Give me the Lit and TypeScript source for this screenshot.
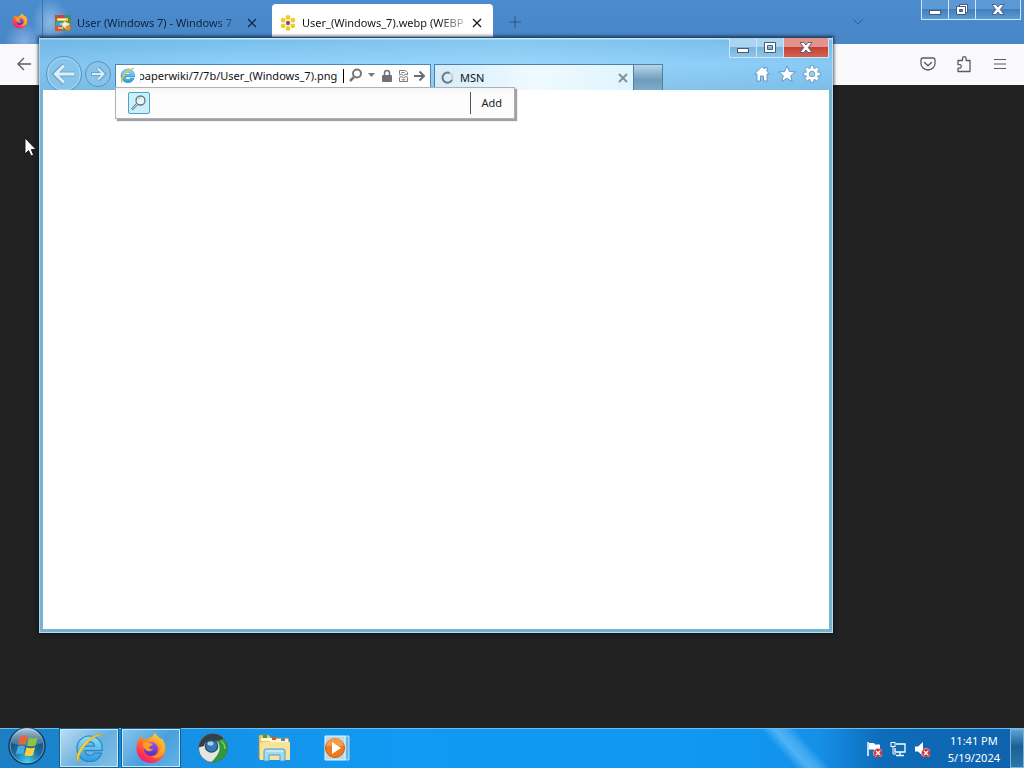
import { LitElement, html, css, svg } from "lit";
import { customElement } from "lit/decorators.js";

const ieLogo = html`<svg class="glyph" viewBox="0 0 32 32" aria-hidden="true">
  <defs>
    <linearGradient id="ieb" x1="0" y1="0" x2="0" y2="1">
      <stop offset="0" stop-color="#8fe0fb" /><stop offset="1" stop-color="#2a9be0" />
    </linearGradient>
  </defs>
  <path d="M16.500 4C9.300 4 4 9.500 4 16.600S9.400 29.500 16.800 29.500c5.600 0 10-3.200 11.700-8.300h-7.300c-.9 1.500-2.300 2.300-4.300 2.300-3 0-5-1.900-5.200-4.900h17.600C29.900 10 25 4 16.500 4zM11.800 14.200c.4-2.700 2.200-4.300 4.900-4.300s4.500 1.600 4.800 4.300z" fill="url(#ieb)" stroke="#2b83c4" stroke-width="1.200" />
  <path d="M6 30.500C1 28 4.500 17.500 12.500 9.800 19.500 3 27.500.5 30 3.600c-2.500-1-8 .8-13.500 5.700C9.500 15.600 4.300 25 6 30.500z" fill="#f6d33a" stroke="#c79a16" stroke-width=".5" />
</svg>`;

const firefoxLogo = html`<svg class="glyph" viewBox="0 0 32 32" aria-hidden="true">
  <defs>
    <linearGradient id="ffa" x1=".8" y1="0" x2=".2" y2="1">
      <stop offset="0" stop-color="#ffe23c" /><stop offset=".4" stop-color="#ff8a20" /><stop offset=".75" stop-color="#ff3b4c" /><stop offset="1" stop-color="#e31587" />
    </linearGradient>
    <linearGradient id="ffb" x1="0" y1="0" x2="0" y2="1">
      <stop offset="0" stop-color="#9059ff" /><stop offset="1" stop-color="#5b2bb5" />
    </linearGradient>
  </defs>
  <path d="M3 9c.5-2 1.700-3.800 3-5 .2 1.500.8 2.500 1.600 3.200 1.600-.6 3.400-.4 4.600.2C13.500 6 15 5.200 16.500 5c1.500-.2 2-2.800 3.500-4.500 1 3.400 4 4.300 5.600 6.500.6-.2.900-.6 1-1 3 3.500 4 7.500 3.900 11C30.200 25 24 31 16 31S1.500 25 1.500 17c0-3 .5-5.500 1.500-8z" fill="url(#ffa)" />
  <circle cx="16" cy="17" r="7" fill="url(#ffb)" />
  <path d="M8 11c2.500-1.500 5-1 6.500 0 1.500.3 3 .4 3 1.400-.3 1.500-3 1.500-3.500 3 .8 1.500 2 1.800 4 1.400-.6 2.200-4 3.400-6.500 1.600C8.500 16.500 8 14 8 11z" fill="#ff9b22" />
  <path d="M18 6c5 1 8 5.500 7.500 10.500-.8 5.500-5 8-9 8 6 3.500 13-1 13.200-8C29.600 11 26 7 22 5z" fill="#ffb42e" opacity=".75" />
</svg>`;

/** Caption buttons glyphs: white shapes with a dark outline. */
const minimizeGlyph = svg`<rect x="1.500" y="7.500" width="11" height="4" fill="#fff" stroke="#45597a" />`;
const maximizeGlyph = svg`<path d="M1.500 1.500h11v10h-11zM4.500 4.500v4h5v-4z" fill="#fff" fill-rule="evenodd" stroke="#45597a" />`;
const restoreGlyph = svg`<path d="M4.500 1.500h8v8h-2v-6h-6z" fill="#fff" stroke="#45597a" /><path d="M1.500 3.500h9v8h-9zM4.500 6.500v2h3v-2z" fill="#fff" fill-rule="evenodd" stroke="#45597a" />`;
const closeGlyph = svg`<path d="M1 1.500h4l2 2.500L9 1.500h4L9.300 6.500l3.700 5H9L7 9 5 11.500H1l3.700-5z" fill="#fff" stroke="#45597a" stroke-width=".9" />`;
const caption = (glyph: unknown) =>
  html`<svg width="14" height="13" viewBox="0 0 14 13" aria-hidden="true">${glyph}</svg>`;

const shared = css`
  * { box-sizing: border-box; }
  button, input {
    font: inherit;
    color: inherit;
    border: 0;
    padding: 0;
    margin: 0;
    background: none;
  }
  button { display: flex; align-items: center; justify-content: center; }
  svg { display: block; flex: none; }
  .captions { display: flex; height: 20px; }
  .captions button {
    width: 27px;
    border: 1px solid #cfe6f8;
    border-top: 0;
    border-right-width: 0;
  }
  .captions .close { width: 46px; border-right-width: 1px; }
`;

@customElement("browser-backdrop")
class BrowserBackdrop extends LitElement {
  static styles = [
    shared,
    css`
      :host { display: flex; flex-direction: column; background: #212121; }
      .strip {
        height: 44px;
        display: flex;
        background:
          radial-gradient(ellipse 18px 24px at 50px 22px, rgba(190, 215, 245, .6), transparent),
          radial-gradient(ellipse 20px 20px at 24px 42px, rgba(170, 200, 240, .6), transparent),
          linear-gradient(#4a8ccf, #4886c6);
      }
      .pinned { width: 43px; padding: 13px 0 0 12px; border-right: 1px solid #3c74b2; }
      .pinned .glyph, .favicon { width: 16px; height: 16px; }
      .tabs { display: flex; flex: 1; padding-top: 4px; gap: 6px; min-width: 0; }
      .tab {
        width: 223px;
        height: 40px;
        display: flex;
        align-items: center;
        gap: 6px;
        padding: 0 9px 2px 12px;
        color: #10223c;
      }
      .tab.active { width: 221px; padding: 0 11px 2px 8px; background: #fff; border-radius: 4px 4px 0 0; color: #15141a; }
      .title {
        flex: 1;
        min-width: 0;
        overflow: hidden;
        white-space: nowrap;
        line-height: 16px;
        -webkit-mask-image: linear-gradient(90deg, #000 calc(100% - 28px), rgba(0, 0, 0, .25));
        mask-image: linear-gradient(90deg, #000 calc(100% - 28px), rgba(0, 0, 0, .25));
      }
      .add { width: 24px; height: 36px; margin-left: 4px; }
      .list { width: 24px; height: 36px; margin: 4px 51px 0 0; }
      .captions { padding-right: 3px; }
      .captions button { background: linear-gradient(#5c99d4 45%, #3f7dba 46%, #5a9bd3); }
      .toolbar {
        height: 41px;
        display: flex;
        align-items: center;
        gap: 18px;
        padding: 0 15px 2px 16px;
        background: #f9f9fb;
        color: #5b5b66;
      }
      .toolbar .back { margin-right: auto; }
    `,
  ];

  render() {
    const x = html`<svg width="10" height="10" viewBox="0 0 10 10" aria-hidden="true"><path d="M1 1l8 8M9 1L1 9" stroke="currentColor" stroke-width="1.200" /></svg>`;
    return html`
      <div class="strip">
        <div class="pinned">${firefoxLogo}</div>
        <div class="tabs">
          <div class="tab">
            <svg class="favicon" viewBox="0 0 16 16" aria-hidden="true">
              <rect width="16" height="16" fill="#6b8a48" />
              <path d="M0 0h9v4H0z" fill="#c94836" /><path d="M9 0h7v5H9z" fill="#4d8a62" />
              <path d="M2 3h11v3H2z" fill="#f0c44a" /><path d="M1 7h7v4H1z" fill="#3f9fc4" />
              <path d="M0 11h7v5H0z" fill="#d9542f" /><path d="M9 6l6 3-4 5-4-3z" fill="#f6e7b0" />
              <circle cx="13" cy="13" r="2.500" fill="#e98a3a" /><path d="M3 4.500h8M5 9h6M3 13h5" stroke="#fff" />
            </svg>
            <span class="title">User (Windows 7) - Windows 7</span>
            <button aria-label="Close tab">${x}</button>
          </div>
          <div class="tab active">
            <svg class="favicon" viewBox="0 0 16 16" aria-hidden="true">
              <g fill="#f4c92a">
                <circle cx="8" cy="2.500" r="2.400" /><circle cx="12.800" cy="5.200" r="2.400" /><circle cx="12.800" cy="10.800" r="2.400" />
                <circle cx="8" cy="13.500" r="2.400" /><circle cx="3.200" cy="10.800" r="2.400" /><circle cx="3.200" cy="5.200" r="2.400" />
              </g>
              <circle cx="8" cy="8" r="2.200" fill="#70605a" />
            </svg>
            <span class="title">User_(Windows_7).webp (WEBP</span>
            <button aria-label="Close tab">${x}</button>
          </div>
          <button class="add" aria-label="New tab"><svg width="12" height="12"><path d="M6 0v12M0 6h12" stroke="#2c5688" /></svg></button>
        </div>
        <button class="list" aria-label="List all tabs"><svg width="12" height="8"><path d="M1 1l5 5 5-5" fill="none" stroke="#2f6198" /></svg></button>
        <div class="captions">
          <button aria-label="Minimize browser">${caption(minimizeGlyph)}</button>
          <button aria-label="Restore browser">${caption(restoreGlyph)}</button>
          <button class="close" aria-label="Close browser">${caption(closeGlyph)}</button>
        </div>
      </div>
      <div class="toolbar">
        <button class="back" aria-label="Back"><svg width="16" height="14"><path d="M15 7H2M8 1L2 7l6 6" fill="none" stroke="currentColor" stroke-width="1.300" /></svg></button>
        <button aria-label="Save to Pocket"><svg width="18" height="18" viewBox="0 0 18 18"><path d="M4 3h10q2 0 2 2v3.500a7 6.500 0 0 1-14 0V5q0-2 2-2zM5.500 7.500L9 10.800l3.500-3.300" fill="none" stroke="currentColor" stroke-width="1.300" stroke-linecap="round" /></svg></button>
        <button aria-label="Extensions"><svg width="18" height="18" viewBox="0 0 18 18"><path d="M3 7V5.500h4.500V3.500a1.800 1.800 0 0 1 3.600 0v2H15v11H3v-3.300h1.500a1.800 1.800 0 0 0 0-3.600H3z" fill="none" stroke="currentColor" stroke-width="1.300" stroke-linejoin="round" /></svg></button>
        <button aria-label="Menu"><svg width="18" height="18" viewBox="0 0 18 18"><path d="M3 4.500h12M3 9h12M3 13.500h12" stroke="currentColor" stroke-width="1.200" /></svg></button>
      </div>
    `;
  }
}

@customElement("explorer-window")
class ExplorerWindow extends LitElement {
  static styles = [
    shared,
    css`
      :host {
        box-sizing: border-box;
        display: flex;
        flex-direction: column;
        border: 1px solid #24486c;
        border-color: #24486c #b5dff0 #b5dff0 #a8d8ee;
        background: #77b3cc;
        padding: 0 3px 3px;
        box-shadow: 0 0 3px 1px rgba(10, 15, 35, .7);
      }
      header {
        position: relative;
        z-index: 1;
        margin: 0 -3px;
        padding: 0 3px;
        background:
          linear-gradient(90deg, rgba(90, 160, 210, .25), transparent 25%, rgba(190, 230, 255, .2) 60%, rgba(80, 155, 215, .12)),
          linear-gradient(#c8ecfc 1px, #78bfec 2px, #90d1fa 26px, #82c2ea);
      }
      .top { display: flex; justify-content: flex-end; height: 26px; }
      .captions button { background: linear-gradient(#a9d5f0 45%, #77b3da 46%, #8ec6e8); }
      .captions .close { background: linear-gradient(#e2938c 45%, #c33f34 46%, #d4614f); }
      .nav { display: flex; align-items: flex-end; height: 26px; }
      .travel { width: 72px; height: 34px; display: flex; align-items: flex-end; }
      .travel .back { width: 39px; }
      .travel .forward { width: 32px; }
      .address {
        position: relative;
        flex: 0 0 316px;
        display: flex;
        align-items: center;
        gap: 4px;
        height: 26px;
        padding: 0 4px 4px 3px;
        background: #fff;
        border: 1px solid #4c86b5;
        border-bottom: 0;
        color: #111;
      }
      .address .glyph { width: 17px; height: 17px; }
      .address input { flex: 1; min-width: 0; outline: 0; height: 14px; text-indent: -2px; border-right: 1px solid #000; }
      .suggest {
        position: absolute;
        left: -1px;
        top: 22px;
        width: 400px;
        height: 32px;
        display: flex;
        align-items: center;
        padding: 0 12px;
        background: linear-gradient(#f4f5f5, #fcfdfc 6px);
        border: 1px solid #aeb2b5;
        box-shadow: 2px 2px 1px rgba(70, 70, 70, .5);
        clip-path: inset(0 -6px -6px 0);
      }
      .search { width: 22px; height: 22px; background: #c9f0fb; border: 1px solid #4aa6c0; border-radius: 2px; }
      .addbtn { margin-left: auto; height: 22px; padding-left: 10px; border-left: 1px solid #555; color: #222; }
      .tab {
        flex: 0 0 200px;
        display: flex;
        align-items: center;
        gap: 6px;
        height: 26px;
        margin-left: 3px;
        padding: 0 5px 0 6px;
        border: 1px solid #4c7fae;
        border-bottom: 0;
        background: linear-gradient(100deg, #d3edfb, #effaff 50%, #dff4fd);
        color: #111;
      }
      .tab span { flex: 1; line-height: 16px; }
      .fresh { width: 29px; height: 26px; border: 1px solid #587f9f; border-left: 0; border-bottom: 0; background: linear-gradient(#b7d6e8, #6f9bbb 60%, #7cacca); }
      .tools { display: flex; gap: 7px; margin-left: auto; padding: 0 8px 7px 0; }
      main { flex: 1; background: #fff; }
    `,
  ];

  render() {
    const teeth = [0, 45, 90, 135, 180, 225, 270, 315];
    return html`
      <header>
        <div class="top">
          <div class="captions">
            <button aria-label="Minimize">${caption(minimizeGlyph)}</button>
            <button aria-label="Maximize">${caption(maximizeGlyph)}</button>
            <button class="close" aria-label="Close">${caption(closeGlyph)}</button>
          </div>
        </div>
        <div class="nav">
          <div class="travel">
            <button class="back" aria-label="Back">
              <svg width="39" height="34">
                <circle cx="21" cy="18" r="17.500" fill="#88c4ea" stroke="#5794bf" />
                <circle cx="21" cy="18" r="16.200" fill="none" stroke="#b5def5" opacity=".7" />
                <path d="M31 18H12M21 9l-9 9 9 9" fill="none" stroke="#6ba5cc" stroke-width="5" />
                <path d="M31 18H13M21 9.500L12.500 18l8.500 8.500" fill="none" stroke="#d9effc" stroke-width="3" />
              </svg>
            </button>
            <button class="forward" aria-label="Forward">
              <svg width="32" height="34">
                <circle cx="16" cy="18" r="12.500" fill="#88c4ea" stroke="#5794bf" />
                <path d="M9 18h13M16 12l6 6-6 6" fill="none" stroke="#6ba5cc" stroke-width="4" />
                <path d="M10 18h11M16 12.500l5.500 5.500-5.500 5.500" fill="none" stroke="#d9effc" stroke-width="2" />
              </svg>
            </button>
          </div>
          <div class="address">
            ${ieLogo}
            <input aria-label="Address" .value=${"paperwiki/7/7b/User_(Windows_7).png"} />
            <button aria-label="Search"><svg width="15" height="15"><circle cx="9" cy="5.500" r="4" fill="none" stroke="#777" stroke-width="2" /><path d="M6 9l-4 4" stroke="#777" stroke-width="2.500" /></svg></button>
            <button aria-label="Show history"><svg width="9" height="5"><path d="M1 0h7L4.500 4z" fill="#777" /></svg></button>
            <button aria-label="Security report"><svg width="14" height="14"><path d="M4.500 6V4a2.500 2.500 0 0 1 5 0v2" fill="none" stroke="#706f78" stroke-width="1.500" /><rect x="2" y="6" width="10" height="7" rx="1" fill="#706f78" /></svg></button>
            <button aria-label="Compatibility view"><svg width="11" height="14"><path d="M1.500 5V1.500h6l2 2V5M1.500 9v3.500h8V9M1 6.500l2-1.500 2.500 1.500L8 5l2 1M1 9l2-1.500L5.500 9 8 7.500l2 1M3.500 3.500h3M3.500 10.800h4" fill="none" stroke="#7d7d80" /></svg></button>
            <button aria-label="Go"><svg width="13" height="14"><path d="M1 7h10M6.500 2.500L11 7l-4.500 4.500" fill="none" stroke="#6c6c6c" stroke-width="2" /></svg></button>
            <div class="suggest">
              <button class="search" aria-label="Search suggestions"><svg width="18" height="18"><circle cx="10.500" cy="6.500" r="4.500" fill="#e8f8fd" stroke="#68757d" stroke-width="1.300" /><path d="M8 5.500q1-2 3-1.500" fill="none" stroke="#a5bcc8" /><path d="M7 10l-5 5.500" stroke="#68757d" stroke-width="2.500" /><path d="M7 10l-4.500 5" stroke="#dce8ee" /></svg></button>
              <button class="addbtn">Add</button>
            </div>
          </div>
          <div class="tab">
            <svg width="13" height="13"><circle cx="6.500" cy="6.500" r="5" fill="none" stroke="#c5ccd2" stroke-width="2" /><path d="M8.500 2A5 5 0 1 0 11 9" fill="none" stroke="#727a82" stroke-width="2" /></svg>
            <span>MSN</span>
            <button aria-label="Close MSN"><svg width="10" height="10"><path d="M1 1l8 8M9 1L1 9" stroke="#7f929f" stroke-width="2" /></svg></button>
          </div>
          <button class="fresh" aria-label="New tab"></button>
          <div class="tools">
            <button aria-label="Home"><svg width="18" height="18"><path d="M9 1.500L1.500 9H4v7h3.500v-5h3v5H14V9h2.500L14 6.500v-4h-2.500v1.500z" fill="#fff" stroke="#5b93bd" stroke-width=".9" /></svg></button>
            <button aria-label="Favorites"><svg width="18" height="18"><path d="M9 1l2.300 5.500 5.900.4-4.500 3.800 1.400 5.800L9 13.300l-5.100 3.200 1.400-5.800L.8 6.900l5.900-.4z" fill="#fff" stroke="#5b93bd" stroke-width=".9" /></svg></button>
            <button aria-label="Tools"><svg width="18" height="18" viewBox="0 0 18 18">
              ${teeth.map((a) => svg`<rect x="7.200" y=".8" width="3.600" height="5" fill="#fff" stroke="#5b93bd" stroke-width=".8" transform="rotate(${a} 9 9)" />`)}
              <circle cx="9" cy="9" r="4.300" fill="#a9cde5" stroke="#fff" stroke-width="2.800" /><circle cx="9" cy="9" r="2.800" fill="none" stroke="#5b93bd" stroke-width=".8" />
            </svg></button>
          </div>
        </div>
      </header>
      <main></main>
    `;
  }
}

@customElement("task-bar")
class TaskBar extends LitElement {
  static styles = [
    shared,
    css`
      :host {
        box-sizing: border-box;
        display: flex;
        align-items: stretch;
        height: 40px;
        border-top: 1px solid #6dbcf0;
        color: #fff;
        background:
          linear-gradient(48deg, transparent calc(100% - 196px), rgba(140, 210, 255, .5) calc(100% - 186px), rgba(140, 210, 255, .35) calc(100% - 178px), transparent calc(100% - 170px)),
          linear-gradient(90deg, #1c7fc2, #1591e6 190px, #119af4 40%, #0f97f2 72%, #1590e8 80%, #0e6cb9 86%, #0d62ad);
      }
      .start { width: 54px; align-items: flex-start; }
      .start svg { margin-top: -3px; }
      .apps { display: flex; gap: 4px; padding: 0 0 1px 6px; }
      .apps button { width: 58px; border: 1px solid transparent; }
      .apps .running { border-color: #c5e8fa; outline: 1px solid #145f98; background: linear-gradient(135deg, #bcdcf0, #67b0df 55%, #7fc0e8); }
      .apps .second { background: linear-gradient(135deg, #8ac4e9, #48a0dd 55%, #62b2e8); }
      .glyph { width: 32px; height: 32px; }
      .tray { display: flex; align-items: center; gap: 8px; margin-left: auto; }
      .clock { display: block; padding: 0 10px; line-height: 17px; text-align: center; }
      .peek { width: 14px; border: 1px solid #78b4dc; background: linear-gradient(#5fa1d0, #1a6198 45%, #2b75ab); }
    `,
  ];

  render() {
    const badge = svg`<circle cx="12" cy="12" r="4.500" fill="#d43232" stroke="#f0b0b0" stroke-width=".8" /><path d="M10 10l4 4M14 10l-4 4" stroke="#fff" stroke-width="1.400" />`;
    return html`
      <button class="start" aria-label="Start">
        <svg width="40" height="40" viewBox="0 0 40 40">
          <defs>
            <radialGradient id="orb" cx=".5" cy=".95" r=".9"><stop offset="0" stop-color="#3fd3f3" /><stop offset=".45" stop-color="#1c6d9f" /><stop offset="1" stop-color="#163f66" /></radialGradient>
            <linearGradient id="gl" x1="0" y1="0" x2="0" y2="1"><stop offset="0" stop-color="#e2eef6" stop-opacity=".8" /><stop offset="1" stop-color="#9fc1d8" stop-opacity=".2" /></linearGradient>
          </defs>
          <circle cx="20" cy="20" r="18" fill="url(#orb)" stroke="#113d63" stroke-width="1.500" />
          <circle cx="20" cy="20" r="16.800" fill="none" stroke="#86bedb" stroke-width=".7" />
          <path d="M4 17a16 15 0 0 1 32 0q-16 6-32 0z" fill="url(#gl)" />
          <path d="M13 10.500q4-2 7.500 0l-2 8.500q-3.500-1.700-7.500 0z" fill="#e8643a" />
          <path d="M22 11.500q4 2 8.500 0L28.500 19.500q-4.200 2-8.500 0z" fill="#8cc63e" />
          <path d="M10.800 20.500q3.700-1.800 7.300 0l-2 8q-3.500-1.800-7.300 0z" fill="#48a9e8" />
          <path d="M19.600 21.200q4 2 8.500 0L26 29.200q-4.200 1.800-8.500 0z" fill="#fbd03c" />
        </svg>
      </button>
      <div class="apps">
        <button class="running" aria-label="Internet Explorer">${ieLogo}</button>
        <button class="running second" aria-label="Firefox">${firefoxLogo}</button>
        <button aria-label="Chromium">
          <svg width="32" height="32">
            <circle cx="16" cy="16" r="14.500" fill="#e4e6df" />
            <path d="M1.500 15.500A14.500 14.500 0 0 1 27 6.500l-2 3.500-11-2q-6 1-7 6z" fill="#343f49" />
            <path d="M27 6.500A14.500 14.500 0 0 1 19 30.200q-3 .6-5 .2 8-8 8.500-13 .5-6-3-8.400z" fill="#2f9a3c" />
            <path d="M24 9q4 3 4 8" fill="none" stroke="#7ccb6f" stroke-width="1.500" />
            <circle cx="14.500" cy="14" r="6.800" fill="#27485f" /><circle cx="14.500" cy="14" r="5.500" fill="#3479b5" /><ellipse cx="13.500" cy="11.500" rx="3" ry="2" fill="#bfe0f5" opacity=".85" />
            <circle cx="16" cy="16" r="14.500" fill="none" stroke="#39525a" opacity=".6" />
          </svg>
        </button>
        <button aria-label="Libraries">
          <svg width="34" height="32">
            <path d="M1 27V4q0-1 1-1h9l2 3h17l1 2v19z" fill="#e8c765" stroke="#b8933a" stroke-width=".6" />
            <path d="M3 6h12v3H3zM12 7h18v4H12z" fill="#fff7da" /><path d="M5 3h4v3H5z" fill="#3d9b4a" /><path d="M14 5h4v3h-4z" fill="#d4592e" /><path d="M23 6h4v3h-4z" fill="#3f8ec9" />
            <path d="M2 28V11q5-2 11-1h19v18z" fill="#f8e39b" />
            <path d="M6 29V19q0-2 2-2h17q2 0 2 2v10h-5v-6H11v6z" fill="#a3d8f2" stroke="#4f9fc9" /><path d="M8 19h17" stroke="#e8f8ff" />
          </svg>
        </button>
        <button aria-label="Media Player">
          <svg width="32" height="32">
            <path d="M24 4h4v24h-4z" fill="#6cb4e2" stroke="#d6effc" stroke-width=".8" /><path d="M4 4h20v24H4z" fill="#b9d9ed" stroke="#e6f4fb" />
            <circle cx="14" cy="16" r="9.500" fill="#ef7a1c" stroke="#c95c12" /><path d="M5.500 14a8.500 8.500 0 0 1 17 0z" fill="#ffb066" opacity=".6" />
            <path d="M11 10l9 6-9 6z" fill="#fff" />
          </svg>
        </button>
      </div>
      <div class="tray">
        <svg width="16" height="16"><path d="M2 1v14" stroke="#fff" stroke-width="1.500" /><path d="M3 2h5l1 1.500h5V10H9L8 8.500H3z" fill="#fff" />${badge}</svg>
        <svg width="16" height="16"><path d="M6 3h9v8H5V7M10 11v3M6 14.500h8" fill="none" stroke="#fff" stroke-width="1.300" /><rect x="1" y="1.500" width="4" height="4" fill="none" stroke="#fff" /><path d="M3 5.500V13h3" fill="none" stroke="#fff" /></svg>
        <svg width="16" height="16"><path d="M1 5.500h3L9 1v14l-5-4.500H1z" fill="#fff" />${badge}</svg>
        <button class="clock">11:41 PM<br />5/19/2024</button>
      </div>
      <button class="peek" aria-label="Show desktop"></button>
    `;
  }
}

@customElement("app-root")
class AppRoot extends LitElement {
  static styles = css`
    :host {
      position: relative;
      display: flex;
      flex-direction: column;
      height: 100vh;
      overflow: hidden;
      font: 11px/16px "Noto Sans", "Open Sans", sans-serif;
    }
    browser-backdrop { flex: 1; }
    explorer-window {
      position: absolute;
      left: 39px;
      top: 37px;
      width: calc(100% - 230px);
      height: calc(100% - 172px);
    }
    .pointer { position: absolute; left: 24px; top: 137px; }
  `;

  render() {
    return html`
      <browser-backdrop></browser-backdrop>
      <explorer-window></explorer-window>
      <task-bar></task-bar>
      <svg class="pointer" width="13" height="20" aria-hidden="true"><path d="M1 1v16l3.600-3.500L7 19l2.600-1L7.300 12.500H12z" fill="#fff" stroke="#111" stroke-width=".9" /></svg>
    `;
  }
}
